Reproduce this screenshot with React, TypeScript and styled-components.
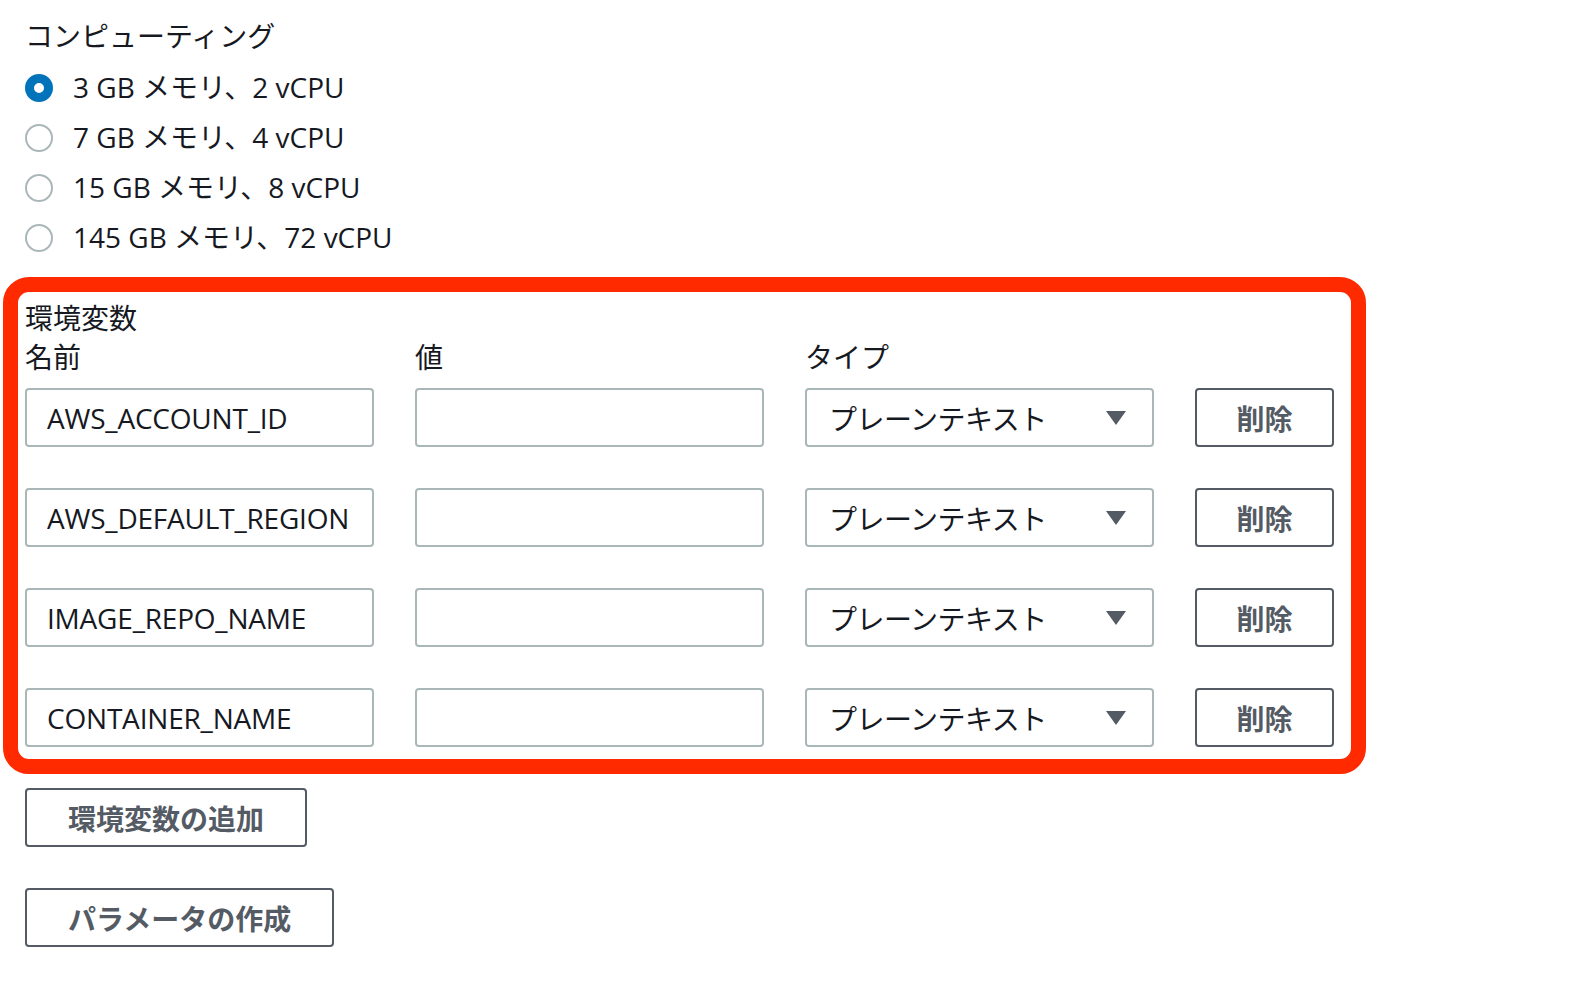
import styled, { createGlobalStyle } from "styled-components";

const GlobalStyle = createGlobalStyle`
  body {
    margin: 0;
    background: #ffffff;
    color: #16191f;
    font-family: "Open Sans", "Noto Sans CJK JP", sans-serif;
  }
`;

const COMPUTE_OPTIONS = [
  "3 GB メモリ、2 vCPU",
  "7 GB メモリ、4 vCPU",
  "15 GB メモリ、8 vCPU",
  "145 GB メモリ、72 vCPU",
];

const ENV_VARS = [
  "AWS_ACCOUNT_ID",
  "AWS_DEFAULT_REGION",
  "IMAGE_REPO_NAME",
  "CONTAINER_NAME",
];

const Page = styled.div`
  padding: 16px 0 0 25px;
  font-size: 28px;
`;

const Heading = styled.div`
  line-height: 40px;
`;

const RadioGroup = styled.div`
  display: flex;
  flex-direction: column;
  margin-top: 7px;
`;

const RadioRow = styled.label`
  display: flex;
  align-items: center;
  gap: 20px;
  height: 50px;
`;

const RadioText = styled.span`
  line-height: 40px;
  margin-top: -3px;
`;

const RadioDot = styled.span<{ $checked?: boolean }>`
  box-sizing: border-box;
  width: 28px;
  height: 28px;
  border-radius: 50%;
  flex: none;
  background: #ffffff;
  border: ${(p) => (p.$checked ? "9px solid #0073bb" : "2px solid #aab7b8")};
`;

const Section = styled.section`
  box-sizing: border-box;
  width: 1363px;
  margin: 14px 0 0 -22px;
  padding: 6px 17px 12px 7px;
  border: 15px solid #ff2a00;
  border-radius: 26px;
`;

const SectionTitle = styled.div`
  line-height: 40px;
  margin-bottom: -1px;
`;

const Grid = styled.div`
  display: grid;
  grid-template-columns: 349px 349px 349px 139px;
  column-gap: 41px;
  row-gap: 41px;
`;

const ColumnLabel = styled.div`
  line-height: 40px;
  margin-bottom: -30px;
`;

const TextInput = styled.input`
  box-sizing: border-box;
  width: 100%;
  height: 59px;
  margin: 0;
  padding: 0 20px;
  border: 2px solid #aab7b8;
  border-radius: 4px;
  background: #ffffff;
  color: #16191f;
  font: inherit;
  font-size: 28px;
  letter-spacing: -0.2px;
  outline: none;
`;

const Select = styled.div`
  box-sizing: border-box;
  display: flex;
  align-items: center;
  justify-content: space-between;
  height: 59px;
  padding: 0 26px 0 22px;
  border: 2px solid #aab7b8;
  border-radius: 4px;
  letter-spacing: -0.5px;
`;

const Caret = styled.span`
  width: 0;
  height: 0;
  border-left: 10px solid transparent;
  border-right: 10px solid transparent;
  border-top: 14px solid #545b64;
`;

const Button = styled.button<{ $wide?: boolean }>`
  box-sizing: border-box;
  display: flex;
  align-items: center;
  justify-content: center;
  height: 59px;
  margin: 0;
  padding: ${(p) => (p.$wide ? "0" : "0 41px")};
  width: ${(p) => (p.$wide ? "100%" : "auto")};
  border: 2px solid #545b64;
  border-radius: 4px;
  background: #ffffff;
  color: #545b64;
  font: inherit;
  font-size: 28px;
  font-weight: 700;
`;

const Actions = styled.div`
  display: flex;
  flex-direction: column;
  align-items: flex-start;
  gap: 41px;
  margin-top: 14px;
`;

export default function App() {
  return (
    <>
      <GlobalStyle />
      <Page>
        <Heading>コンピューティング</Heading>
        <RadioGroup>
          {COMPUTE_OPTIONS.map((label, i) => (
            <RadioRow key={label}>
              <RadioDot $checked={i === 0} />
              <RadioText>{label}</RadioText>
            </RadioRow>
          ))}
        </RadioGroup>

        <Section>
          <SectionTitle>環境変数</SectionTitle>
          <Grid>
            <ColumnLabel>名前</ColumnLabel>
            <ColumnLabel>値</ColumnLabel>
            <ColumnLabel>タイプ</ColumnLabel>
            <ColumnLabel />
            {ENV_VARS.map((name) => (
              <Row key={name} name={name} />
            ))}
          </Grid>
        </Section>

        <Actions>
          <Button>環境変数の追加</Button>
          <Button>パラメータの作成</Button>
        </Actions>
      </Page>
    </>
  );
}

const Row = ({ name }: { name: string }) => (
  <>
    <TextInput defaultValue={name} readOnly />
    <TextInput defaultValue="" />
    <Select>
      <span>プレーンテキスト</span>
      <Caret />
    </Select>
    <Button $wide>削除</Button>
  </>
);
